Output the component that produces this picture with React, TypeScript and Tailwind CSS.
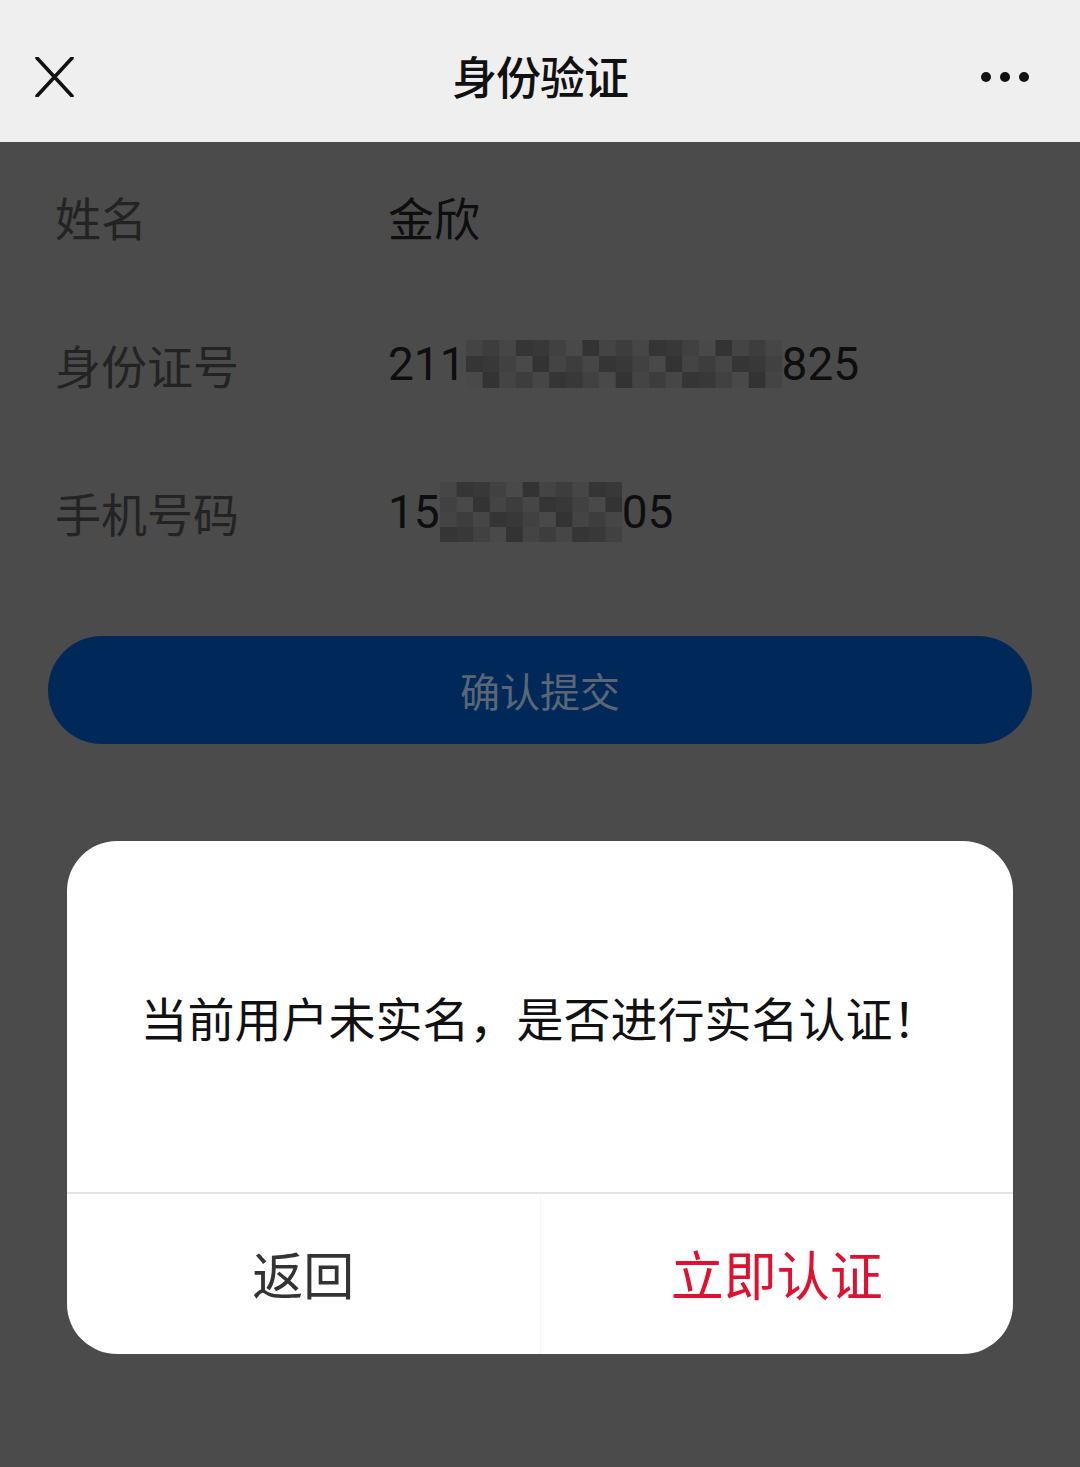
import React from "react";

function Mosaic({ w, h, cols, rows, seed }: { w: number; h: number; cols: number; rows: number; seed: number }) {
  const shades = ["#383838", "#414141", "#464646", "#353535", "#444444", "#3d3d3d", "#494949", "#333333"];
  const cw = w / cols;
  const rh = h / rows;
  const rects: React.ReactNode[] = [];
  let s = seed;
  for (let r = 0; r < rows; r++) {
    for (let c = 0; c < cols; c++) {
      s = (s * 9301 + 49297) % 233280;
      const shade = shades[s % shades.length];
      rects.push(<rect key={`${r}-${c}`} x={c * cw} y={r * rh} width={cw + 0.5} height={rh + 0.5} fill={shade} />);
    }
  }
  return (
    <svg width={w} height={h} viewBox={`0 0 ${w} ${h}`} className="inline-block align-middle">
      {rects}
    </svg>
  );
}

export default function App() {
  const font = { fontFamily: '"Noto Sans CJK SC", "Noto Sans", sans-serif' };
  const digits = { fontFamily: 'Roboto, "Noto Sans CJK SC", sans-serif' };
  const rows = [
    { label: "姓名", value: <span>金欣</span> },
    {
      label: "身份证号",
      value: (
        <span className="flex items-center">
          <span style={digits}>211</span>
          <Mosaic w={316} h={48} cols={19} rows={3} seed={7} />
          <span style={digits}>825</span>
        </span>
      ),
    },
    {
      label: "手机号码",
      value: (
        <span className="flex items-center">
          <span style={digits}>15</span>
          <Mosaic w={182} h={60} cols={11} rows={4} seed={13} />
          <span style={digits}>05</span>
        </span>
      ),
    },
  ];
  return (
    <div className="w-[1080px] h-[1467px] bg-[#4b4b4b] flex flex-col" style={font}>
      <div className="h-[142px] bg-[#efefef] flex items-center justify-between px-[34px] relative">
        <svg width="40" height="40" viewBox="0 0 40 40" className="mt-[12px]">
          <path d="M3 1 L38 39 M38 1 L3 39" stroke="#111" strokeWidth="3.6" strokeLinecap="round" />
        </svg>
        <div className="absolute left-0 right-0 text-center text-[45px] font-medium text-[#111] leading-none tracking-[-1px] pointer-events-none mt-[8px]">
          身份验证
        </div>
        <svg width="50" height="12" viewBox="0 0 50 12" className="mr-[16px] mt-[12px]">
          <circle cx="6" cy="6" r="5" fill="#111" />
          <circle cx="25" cy="6" r="5" fill="#111" />
          <circle cx="44" cy="6" r="5" fill="#111" />
        </svg>
      </div>
      <div className="flex flex-col">
        {rows.map((r) => (
          <div key={r.label} className="h-[148px] flex items-center pl-[55px]">
            <div className="w-[333px] text-[46px] text-[#232323] leading-none">{r.label}</div>
            <div className="text-[46px] text-[#0e0e0e] leading-none">{r.value}</div>
          </div>
        ))}
      </div>
      <div className="mt-[50px] mx-[48px] h-[108px] rounded-full bg-[#00295a] flex items-center justify-center">
        <span className="text-[40px] text-[#5b6675] leading-none">确认提交</span>
      </div>
      <div className="mt-[97px] mx-[67px] bg-white rounded-[50px] overflow-hidden flex flex-col">
        <div className="h-[351px] flex items-center justify-center">
          <span className="text-[47px] text-[#111] leading-none">当前用户未实名，是否进行实名认证！</span>
        </div>
        <div className="h-[162px] border-t-2 border-[#e4e4e4] flex">
          <div className="flex-1 flex items-center justify-center border-r border-[#f4f5f7]">
            <span className="text-[51px] text-[#333] leading-none mt-[-2px]">返回</span>
          </div>
          <div className="flex-1 flex items-center justify-center">
            <span className="text-[53px] text-[#e0102e] leading-none mt-[-2px]">立即认证</span>
          </div>
        </div>
      </div>
    </div>
  );
}
